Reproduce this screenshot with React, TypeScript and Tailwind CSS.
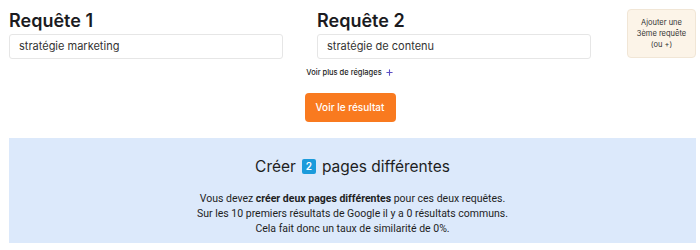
import { Plus } from "lucide-react";

const QueryField = ({ label, value }: { label: string; value: string }) => (
    <div className="w-[274px]">
        <h2 className="text-[18px] leading-[22px] font-semibold text-[#1b1b1f] mt-[10px]">{label}</h2>
        <div className="mt-[2px] h-[25px] border border-[#e6e6e6] rounded-[3px] bg-white flex items-center px-[9px] text-[11px] text-[#333]">
            {value}
        </div>
    </div>
);

export default function App() {
    return (
        <div className="w-[700px] h-[250px] bg-white overflow-hidden font-['Inter','Roboto',sans-serif]">
            {/* Queries */}
            <div className="flex items-start pl-[9px]">
                <QueryField label="Requête 1" value="stratégie marketing" />
                <div className="ml-[34px]">
                    <QueryField label="Requête 2" value="stratégie de contenu" />
                </div>
                <div className="ml-[36px] mt-[9px] w-[69px] h-[49px] rounded-[4px] border border-[#f1e6d6] bg-[#fcf4e8] flex items-center justify-center text-center text-[7.5px] leading-[11px] text-[#333]">
                    Ajouter une<br />3ème requête<br />(ou +)
                </div>
            </div>

            {/* Settings */}
            <div className="flex justify-center items-center gap-[3px] mt-[8px] text-[7.5px] font-medium text-[#222]">
                Voir plus de réglages
                <Plus className="w-[9px] h-[9px] text-[#5b4fc4]" strokeWidth={3} />
            </div>

            <div className="flex justify-center mt-[15px]">
                <button className="w-[91px] h-[29px] rounded-[4px] bg-[#f97a1f] text-white text-[10px] font-medium">
                    Voir le résultat
                </button>
            </div>

            {/* Result */}
            <div className="mt-[16px] ml-[9px] w-[687px] h-[105px] bg-[#dce9fb] flex flex-col items-center font-['Roboto',sans-serif] text-[#1e1e1e]">
                <div className="mt-[17px] flex items-center gap-[6px] text-[15.5px] font-['Inter',sans-serif]">
                    Créer
                    <span className="w-[14px] h-[15px] rounded-[2px] bg-[#1b9bdb] text-white text-[10px] font-semibold flex items-center justify-center">2</span>
                    pages différentes
                </div>
                <div className="mt-[12px] text-[10.5px] leading-[15px] text-center">
                    <p>Vous devez <b className="font-bold">créer deux pages différentes</b> pour ces deux requêtes.</p>
                    <p>Sur les 10 premiers résultats de Google il y a 0 résultats communs.</p>
                    <p>Cela fait donc un taux de similarité de 0%.</p>
                </div>
            </div>
        </div>
    );
}
